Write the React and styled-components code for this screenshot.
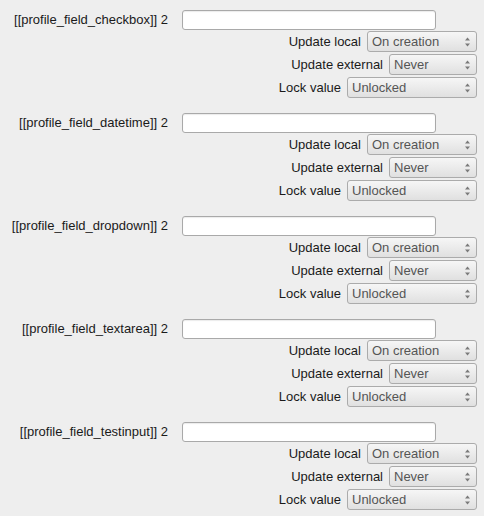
import React from 'react';
import styled, { createGlobalStyle } from 'styled-components';

const GlobalStyle = createGlobalStyle`
  body {
    margin: 0;
    background: #eeeeee;
    font-family: "Liberation Sans", Arial, sans-serif;
    font-size: 13px;
    color: #1a1a1a;
  }
`;

const Page = styled.form`
  padding-top: 10px;
  width: 484px;
`;

const Section = styled.fieldset`
  border: none;
  margin: 0 0 15px;
  padding: 0;
`;

const FieldRow = styled.div`
  display: grid;
  grid-template-columns: 168px 254px;
  column-gap: 14px;
  align-items: center;
`;

const FieldLabel = styled.label`
  text-align: right;
  white-space: nowrap;
  line-height: 16px;
`;

const TextInput = styled.input`
  box-sizing: border-box;
  height: 20px;
  width: 100%;
  margin: 0;
  border: 1px solid #a9a9a9;
  border-radius: 3px;
  background: #fff;
  box-shadow: inset 0 1px 1px rgba(0, 0, 0, 0.08);
  font: inherit;
  padding: 0 4px;
`;

const OptionList = styled.div`
  display: flex;
  flex-direction: column;
  align-items: flex-end;
  gap: 2px;
  margin-top: 1px;
  padding-right: 7px;
`;

const OptionRow = styled.div`
  display: flex;
  align-items: center;
  gap: 6px;
`;

const OptionLabel = styled.label`
  white-space: nowrap;
`;

const SelectWrap = styled.div`
  position: relative;
  width: ${p => p.$width}px;
  height: 21px;
`;

const Select = styled.select`
  appearance: none;
  box-sizing: border-box;
  width: 100%;
  height: 100%;
  margin: 0;
  padding: 0 18px 0 4px;
  border: 1px solid #ababab;
  border-radius: 3px;
  background: linear-gradient(#f6f6f6, #e0e0e0);
  color: #555;
  font: inherit;
  font-size: 13px;
  outline: none;
`;

const Arrows = styled.svg`
  position: absolute;
  right: 6px;
  top: 5px;
  pointer-events: none;
`;

function Dropdown({ width, value, options }) {
  return (
    <SelectWrap $width={width}>
      <Select defaultValue={value}>
        {options.map(o => <option key={o}>{o}</option>)}
      </Select>
      <Arrows width="7" height="12" viewBox="0 0 7 12">
        <path d="M3.5 1.5 L6 4.5 H1 Z" fill="#7a7a7a" />
        <path d="M3.5 10.5 L6 7.5 H1 Z" fill="#7a7a7a" />
      </Arrows>
    </SelectWrap>
  );
}

const fields = ['checkbox', 'datetime', 'dropdown', 'textarea', 'testinput'];

export default function App() {
  return (
    <>
      <GlobalStyle />
      <Page>
        {fields.map(f => (
          <Section key={f}>
            <FieldRow>
              <FieldLabel>[[profile_field_{f}]] 2</FieldLabel>
              <TextInput type="text" />
            </FieldRow>
            <OptionList>
              <OptionRow>
                <OptionLabel>Update local</OptionLabel>
                <Dropdown width={110} value="On creation" options={['On creation', 'On every login']} />
              </OptionRow>
              <OptionRow>
                <OptionLabel>Update external</OptionLabel>
                <Dropdown width={88} value="Never" options={['Never', 'On update']} />
              </OptionRow>
              <OptionRow>
                <OptionLabel>Lock value</OptionLabel>
                <Dropdown width={130} value="Unlocked" options={['Unlocked', 'Unlocked if empty', 'Locked']} />
              </OptionRow>
            </OptionList>
          </Section>
        ))}
      </Page>
    </>
  );
}
